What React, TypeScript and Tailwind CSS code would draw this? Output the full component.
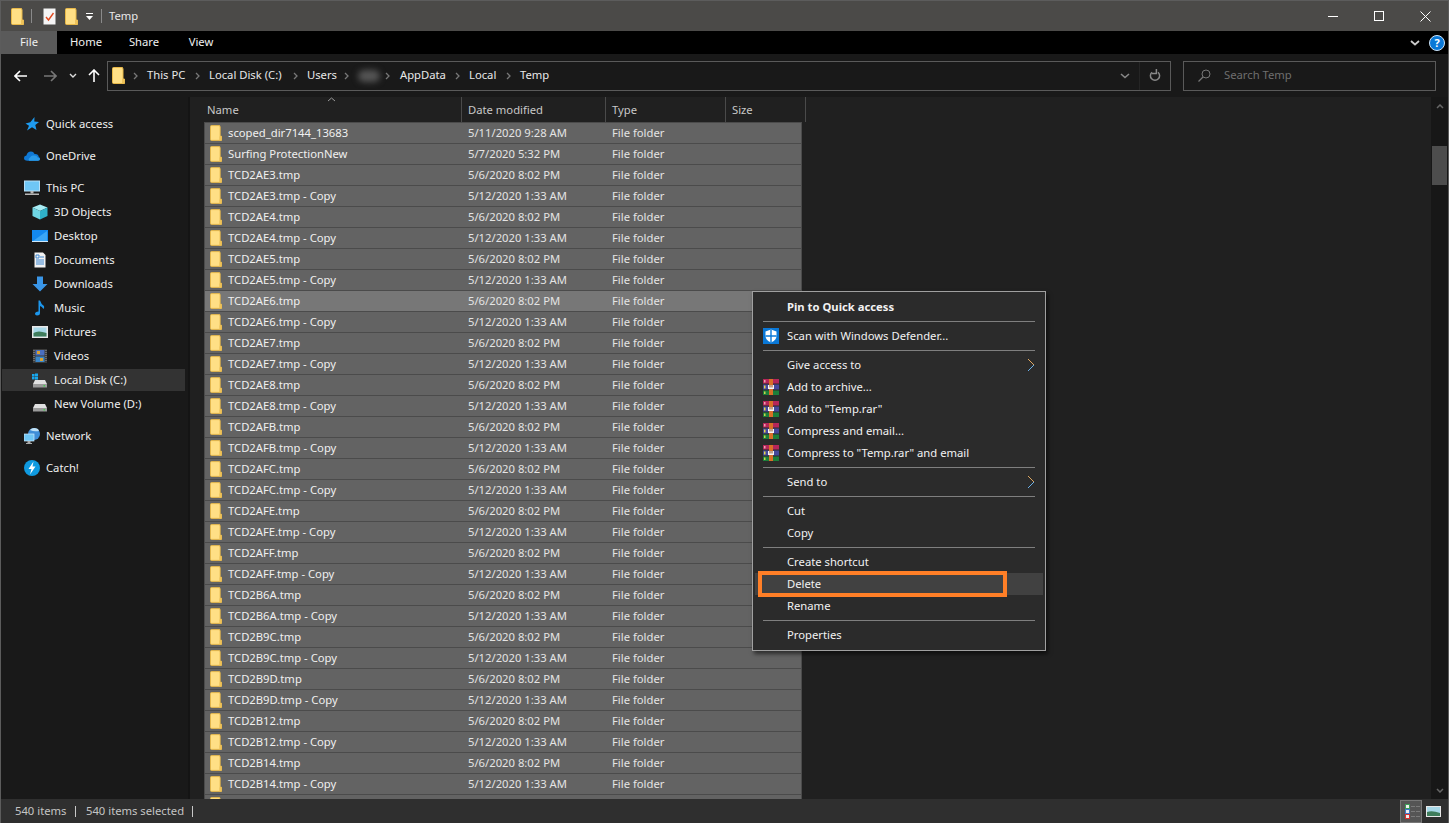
import { ReactNode } from 'react';

const font = { fontFamily: '"Noto Sans", sans-serif' };

function Folder({ className = 'w-[13px] h-[17px]' }: { className?: string }) {
  return (
    <svg viewBox="0 0 13 17" className={className}>
      <path d="M0.5 1.5 Q0.5 0.5 1.5 0.5 H10.5 L11 2 V12 L12.5 12 V16.5 H1.5 Q0.5 16.5 0.5 15.5 Z" fill="#ffdf85" stroke="#e8b848" />
      <rect x="10" y="12" width="2.5" height="4.5" fill="#eec25a" />
    </svg>
  );
}

function Rar() {
  return (
    <svg viewBox="0 0 16 16" className="w-4 h-4 shrink-0">
      <rect x="0" y="0" width="16" height="4.5" fill="#b5265a" />
      <rect x="0" y="5.5" width="16" height="5" fill="#45489c" />
      <rect x="0" y="11.5" width="16" height="4.5" fill="#1c7f3a" />
      <rect x="6" y="0" width="4" height="16" fill="#d96f28" />
      <rect x="5" y="6" width="6" height="4" fill="#f4f4f4" />
      <rect x="6.5" y="6" width="1" height="2.5" fill="#8a4a20" />
      <rect x="8.5" y="6" width="1" height="2.5" fill="#8a4a20" />
      <rect x="1" y="6.5" width="1.5" height="3" fill="#e8d84a" />
      <rect x="1" y="12.5" width="1.5" height="2.5" fill="#c8d84a" />
      <rect x="1" y="1" width="1.5" height="2.5" fill="#f0a0b0" />
    </svg>
  );
}

function Shield() {
  return (
    <svg viewBox="0 0 16 16" className="w-4 h-4 shrink-0">
      <rect width="16" height="16" fill="#0a78d7" />
      <path d="M8 1.5 L13.5 3.5 V8 Q13.5 12 8 14.5 Q2.5 12 2.5 8 V3.5 Z" fill="#fff" />
      <path d="M7.3 1.5 H8.7 V7.3 H13.5 V8.7 H8.7 V14.5 H7.3 V8.7 H2.5 V7.3 H7.3 Z" fill="#0a78d7" />
    </svg>
  );
}

function Chev({ className = '' }: { className?: string }) {
  return (
    <svg viewBox="0 0 5 8" className={`w-[5px] h-2 shrink-0 ${className}`}>
      <path d="M1 1 L4 4 L1 7" fill="none" stroke="#777" strokeWidth="1.3" />
    </svg>
  );
}

function Drive({ windows = false }: { windows?: boolean }) {
  return (
    <svg viewBox="0 0 16 16" className="w-4 h-4">
      <path d="M3 8 H13 L15 12 H1 Z" fill="#e0e0e0" />
      <rect x="1" y="12" width="14" height="3.5" fill="#9b9b9b" />
      <rect x="11.5" y="13" width="1.5" height="1.5" fill="#43d050" />
      {windows && (
        <g fill="#19a8ee">
          <rect x="0" y="2" width="2.6" height="2.6" />
          <rect x="3" y="1.5" width="3" height="3" />
          <rect x="0" y="5" width="2.6" height="2.4" />
          <rect x="3" y="5" width="3" height="2.6" />
        </g>
      )}
    </svg>
  );
}

const icons: Record<string, ReactNode> = {
  quick: (
    <svg viewBox="0 0 16 16" className="w-4 h-4">
      <path d="M10.5 1 L10.3 5.6 L15 6 L11.3 9 L12.5 14 L8 11.2 L3 14.5 L5 9.8 L1.5 7.5 L6.3 6.3 Z" fill="#1e9bf0" />
    </svg>
  ),
  onedrive: (
    <svg viewBox="0 0 16 16" className="w-4 h-4">
      <path d="M3.4 12.8 Q0 12.6 0 10 Q0 7.8 2.4 7.4 Q3.4 3.6 7 3.6 Q9.4 3.6 10.6 5.9 Q14.4 5.6 14.8 9 Q16 9.6 16 11 Q16 12.8 14 12.8 Z" fill="#0f78d4" />
      <path d="M5 12.8 Q3.8 10.6 6 9.4 Q7.4 6.8 10 7.6 Q12.6 7 13.6 9.4 Q16 9.6 16 11 Q16 12.8 14 12.8 Z" fill="#2a9ae8" />
    </svg>
  ),
  pc: (
    <svg viewBox="0 0 16 16" className="w-4 h-4">
      <rect x="0.5" y="1" width="15" height="10" fill="#6fc6f5" stroke="#b8e0f8" />
      <rect x="6.5" y="11" width="3" height="2.5" fill="#bbb" />
      <rect x="1" y="13.5" width="14" height="1.5" fill="#b8b8b8" />
    </svg>
  ),
  cube: (
    <svg viewBox="0 0 16 16" className="w-4 h-4">
      <path d="M8 0.5 L15.5 3.5 L8 7 L0.5 3.5 Z" fill="#a8ecf4" />
      <path d="M0.5 3.5 L8 7 V15.5 L0.5 12 Z" fill="#6fd6e4" />
      <path d="M15.5 3.5 L8 7 V15.5 L15.5 12 Z" fill="#2fb0c8" />
    </svg>
  ),
  desktop: (
    <svg viewBox="0 0 16 16" className="w-4 h-4">
      <rect x="0" y="2" width="16" height="12" fill="#1388ee" />
      <path d="M1 13 L15 3 V13 Z" fill="#3ba6f5" />
      <rect x="0" y="13" width="16" height="1" fill="#cfe8fb" />
    </svg>
  ),
  docs: (
    <svg viewBox="0 0 16 16" className="w-4 h-4">
      <path d="M2.5 0.5 H11 L13.5 3 V15.5 H2.5 Z" fill="#f2f2f2" />
      <path d="M4 3 H7 V6 H4 Z M8 5 H12 M4 8 H12 M4 10 H12 M4 12 H12" stroke="#3c86d0" fill="none" />
    </svg>
  ),
  downloads: (
    <svg viewBox="0 0 16 16" className="w-4 h-4">
      <path d="M5 0.5 H11 V8 H15.5 L8 15.5 L0.5 8 H5 Z" fill="#3a96e8" />
    </svg>
  ),
  music: (
    <svg viewBox="0 0 16 16" className="w-4 h-4">
      <path d="M6.5 0.5 H8 Q9 4 12 6 Q12.5 8 11.5 9 Q10 6.5 8 6 V13 Q8 15.5 5 15.5 Q3 15.5 3 13.8 Q3 12 6.5 11.5 Z" fill="#1c96ec" />
    </svg>
  ),
  pictures: (
    <svg viewBox="0 0 16 16" className="w-4 h-4">
      <rect x="0" y="2" width="16" height="12" fill="#e8e8e8" />
      <rect x="1.5" y="3.5" width="13" height="9" fill="#a8d8e8" />
      <path d="M1.5 9 Q6 6 14.5 9 V12.5 H1.5 Z" fill="#3f7d5c" />
    </svg>
  ),
  videos: (
    <svg viewBox="0 0 16 16" className="w-4 h-4">
      <rect x="1" y="1" width="14" height="14" fill="#3a3a3a" />
      <path d="M2 2 V14 M14 2 V14" stroke="#9a9a9a" strokeDasharray="1 1" />
      <rect x="3.5" y="2" width="9" height="5.5" fill="#4a6fc0" />
      <rect x="3.5" y="8.5" width="9" height="5.5" fill="#3a86c8" />
      <rect x="5" y="3" width="3" height="3" fill="#d8a030" />
      <rect x="8" y="10" width="3" height="3" fill="#d8a030" />
    </svg>
  ),
  local: <Drive windows />,
  volume: <Drive />,
  network: (
    <svg viewBox="0 0 16 16" className="w-4 h-4">
      <circle cx="10" cy="6" r="6" fill="#3f8ed8" />
      <path d="M6 2 Q10 4 15 3 L14 1 Q10 -1 7 1 Z" fill="#bfe0f5" />
      <rect x="0" y="6" width="10" height="7" fill="#6fc6f5" stroke="#cfe8fb" strokeWidth="0.7" />
      <rect x="3.5" y="13" width="3" height="2" fill="#aaa" />
      <rect x="2" y="15" width="6" height="1" fill="#aaa" />
    </svg>
  ),
  catch: (
    <svg viewBox="0 0 16 16" className="w-4 h-4">
      <circle cx="8" cy="8" r="8" fill="#0f9ae0" />
      <path d="M9.5 1.5 L4.5 9 H7.5 L6 14.5 L11.5 6.5 H8.5 Z" fill="#fff" />
    </svg>
  ),
};

type NavItem = { label: string; icon: string; nested?: boolean; selected?: boolean };

const navGroups: NavItem[][] = [
  [{ label: 'Quick access', icon: 'quick' }],
  [{ label: 'OneDrive', icon: 'onedrive' }],
  [
    { label: 'This PC', icon: 'pc' },
    { label: '3D Objects', icon: 'cube', nested: true },
    { label: 'Desktop', icon: 'desktop', nested: true },
    { label: 'Documents', icon: 'docs', nested: true },
    { label: 'Downloads', icon: 'downloads', nested: true },
    { label: 'Music', icon: 'music', nested: true },
    { label: 'Pictures', icon: 'pictures', nested: true },
    { label: 'Videos', icon: 'videos', nested: true },
    { label: 'Local Disk (C:)', icon: 'local', nested: true, selected: true },
    { label: 'New Volume (D:)', icon: 'volume', nested: true },
  ],
  [{ label: 'Network', icon: 'network' }],
  [{ label: 'Catch!', icon: 'catch' }],
];

const baseNames = ['TCD2AE3', 'TCD2AE4', 'TCD2AE5', 'TCD2AE6', 'TCD2AE7', 'TCD2AE8', 'TCD2AFB', 'TCD2AFC', 'TCD2AFE', 'TCD2AFF', 'TCD2B6A', 'TCD2B9C', 'TCD2B9D', 'TCD2B12', 'TCD2B14'];

// the last row is only peeking out above the status bar, its text is not visible
const files = [
  { name: 'scoped_dir7144_13683', date: '5/11/2020 9:28 AM', type: 'File folder' },
  { name: 'Surfing ProtectionNew', date: '5/7/2020 5:32 PM', type: 'File folder' },
  ...baseNames.flatMap((n) => [
    { name: `${n}.tmp`, date: '5/6/2020 8:02 PM', type: 'File folder' },
    { name: `${n}.tmp - Copy`, date: '5/12/2020 1:33 AM', type: 'File folder' },
  ]),
  { name: '', date: '', type: '' },
];

type MenuEntry = { label?: string; icon?: ReactNode; bold?: boolean; arrow?: boolean; hover?: boolean; sep?: boolean };

const menu: MenuEntry[] = [
  { label: 'Pin to Quick access', bold: true },
  { sep: true },
  { label: 'Scan with Windows Defender...', icon: <Shield /> },
  { sep: true },
  { label: 'Give access to', arrow: true },
  { label: 'Add to archive...', icon: <Rar /> },
  { label: 'Add to "Temp.rar"', icon: <Rar /> },
  { label: 'Compress and email...', icon: <Rar /> },
  { label: 'Compress to "Temp.rar" and email', icon: <Rar /> },
  { sep: true },
  { label: 'Send to', arrow: true },
  { sep: true },
  { label: 'Cut' },
  { label: 'Copy' },
  { sep: true },
  { label: 'Create shortcut' },
  { label: 'Delete', hover: true },
  { label: 'Rename' },
  { sep: true },
  { label: 'Properties' },
];

function TitleBar() {
  return (
    <div className="h-[30px] bg-[#4b4a48] flex items-center shrink-0 text-white">
      <div className="ml-[10px] flex items-center">
        <Folder />
        <div className="w-px h-[14px] bg-[#8a8a8a] ml-[7px]" />
        <svg viewBox="0 0 13 17" className="w-[13px] h-[17px] ml-[11px]">
          <path d="M0.5 0.5 H12.5 V16.5 H0.5 Z" fill="#f5f5f5" />
          <path d="M3 9 L5.5 12 L10.5 5" fill="none" stroke="#e04a20" strokeWidth="1.4" />
        </svg>
        <div className="ml-[9px]">
          <Folder />
        </div>
        <svg viewBox="0 0 9 9" className="w-[9px] h-[9px] ml-[7px]">
          <path d="M1 1.5 H8" stroke="#fff" />
          <path d="M1 4 H8 L4.5 8 Z" fill="#fff" />
        </svg>
        <div className="w-px h-[14px] bg-[#8a8a8a] ml-[7px]" />
        <span className="ml-[7px] text-[11.25px] text-[#e8e8e8]">Temp</span>
      </div>
      <div className="ml-auto flex items-center">
        <div className="w-[46px] flex justify-center">
          <div className="w-[10px] h-px bg-white" />
        </div>
        <div className="w-[46px] flex justify-center">
          <div className="w-[10px] h-[10px] border border-white" />
        </div>
        <div className="w-[46px] flex justify-center">
          <svg viewBox="0 0 11 11" className="w-[11px] h-[11px]">
            <path d="M0.5 0.5 L10.5 10.5 M10.5 0.5 L0.5 10.5" stroke="#fff" />
          </svg>
        </div>
      </div>
    </div>
  );
}

function Ribbon() {
  return (
    <div className="h-[23px] bg-black flex items-center shrink-0 text-[11.25px] text-[#f0f0f0]">
      <div className="w-[56px] h-full bg-[#5a5a5a] flex items-center justify-center">File</div>
      <div className="w-[58px] text-center">Home</div>
      <div className="w-[58px] text-center">Share</div>
      <div className="w-[56px] text-center">View</div>
      <div className="ml-auto flex items-center">
        <svg viewBox="0 0 10 6" className="w-[10px] h-[6px] mr-[9px]">
          <path d="M1 1 L5 4.5 L9 1" fill="none" stroke="#ccc" strokeWidth="1.8" />
        </svg>
        <div className="w-4 h-4 rounded-full bg-[#0a78d7] border border-[#cfe4f7] mr-[3px] flex items-center justify-center text-[11px] font-bold text-white leading-none">?</div>
      </div>
    </div>
  );
}

function Crumb({ children, width }: { children: ReactNode; width: string }) {
  return <span className={`${width} shrink-0 whitespace-nowrap`}>{children}</span>;
}

function AddressRow() {
  return (
    <div className="h-[43px] bg-[#191919] flex items-center shrink-0">
      <div className="w-[106px] flex items-center shrink-0">
        <svg viewBox="0 0 13 12" className="w-[13px] h-3 ml-[13px]">
          <path d="M6 1 L1 6 L6 11 M1 6 H13" fill="none" stroke="#fff" strokeWidth="1.6" />
        </svg>
        <svg viewBox="0 0 13 12" className="w-[13px] h-3 ml-[17px]">
          <path d="M7 1 L12 6 L7 11 M12 6 H0" fill="none" stroke="#777" strokeWidth="1.6" />
        </svg>
        <svg viewBox="0 0 8 5" className="w-2 h-[5px] ml-[12px]">
          <path d="M1 1 L4 4 L7 1" fill="none" stroke="#ddd" strokeWidth="1.4" />
        </svg>
        <svg viewBox="0 0 12 13" className="w-3 h-[13px] ml-[11px]">
          <path d="M1 6 L6 1 L11 6 M6 1 V13" fill="none" stroke="#fff" strokeWidth="1.6" />
        </svg>
      </div>
      <div className="w-[1064px] h-[30px] border border-[#5a5a5a] flex items-center text-[11.25px] text-[#e8e8e8] shrink-0">
        <div className="ml-[4px]">
          <Folder className="w-[13px] h-[17px]" />
        </div>
        <Chev className="ml-[8px] mr-[9px]" />
        <Crumb width="w-[48px]">This PC</Crumb>
        <Chev className="mr-[9px]" />
        <Crumb width="w-[84px]">Local Disk (C:)</Crumb>
        <Chev className="mr-[9px]" />
        <Crumb width="w-[37px]">Users</Crumb>
        <Chev className="mr-[9px]" />
        <div className="w-[22px] h-[12px] rounded-full bg-[#555] blur-[3px] shrink-0" />
        <Chev className="ml-[5px] mr-[10px]" />
        <Crumb width="w-[55px]">AppData</Crumb>
        <Chev className="mr-[9px]" />
        <Crumb width="w-[37px]">Local</Crumb>
        <Chev className="mr-[9px]" />
        <Crumb width="w-[30px]">Temp</Crumb>
        <div className="ml-auto flex items-center h-full">
          <svg viewBox="0 0 10 6" className="w-[10px] h-[6px] mr-[9px]">
            <path d="M1 1 L5 4.5 L9 1" fill="none" stroke="#888" strokeWidth="1.6" />
          </svg>
          <div className="w-px h-full bg-[#252525]" />
          <svg viewBox="0 0 12 13" className="w-3 h-[13px] mx-[9px]">
            <path d="M3 3.2 A4.6 4.6 0 1 0 9 3.2" fill="none" stroke="#888" strokeWidth="1.5" />
            <path d="M7.4 0 V4.6 H2.8" fill="none" stroke="#888" strokeWidth="1.5" />
          </svg>
        </div>
      </div>
      <div className="ml-[12px] w-[253px] h-[30px] border border-[#5a5a5a] flex items-center text-[11.25px] text-[#6e6e6e] shrink-0">
        <svg viewBox="0 0 13 13" className="w-[13px] h-[13px] ml-[14px]">
          <circle cx="8" cy="5" r="4" fill="none" stroke="#777" />
          <path d="M5 8 L0.5 12.5" stroke="#777" strokeWidth="1.2" />
        </svg>
        <span className="ml-[13px]">Search Temp</span>
      </div>
    </div>
  );
}

function Sidebar() {
  return (
    <div className="w-[187px] shrink-0 bg-[#191919] pt-[15px] flex flex-col gap-2 text-[11.25px] text-[#efefef]">
      {navGroups.map((group) => (
        <div key={group[0].label} className="flex flex-col">
          {group.map((item) => (
            <div key={item.label} className="h-6 flex items-center">
              <div className={`ml-px w-[183px] h-[22px] flex items-center ${item.nested ? 'pl-[30px]' : 'pl-[22px]'} ${item.selected ? 'bg-[#333333]' : ''}`}>
                <span className="w-4 h-4 flex">{icons[item.icon]}</span>
                <span className="ml-[6px]">{item.label}</span>
              </div>
            </div>
          ))}
        </div>
      ))}
    </div>
  );
}

function FileList() {
  return (
    <div className="flex-1 bg-[#202020] min-w-0 overflow-hidden border-l-2 border-[#141414] relative">
      <svg viewBox="0 0 9 5" className="absolute left-[137px] top-0 w-[9px] h-[5px]">
        <path d="M1 4 L4.5 1 L8 4" fill="none" stroke="#999" />
      </svg>
      <div className="h-[25px] flex text-[11.25px] text-[#c8c8c8] ml-[11px]">
        <div className="w-[261px] pl-[6px] pt-[5px] border-r border-[#4a4a4a]">Name</div>
        <div className="w-[144px] pl-[6px] pt-[5px] border-r border-[#4a4a4a]">Date modified</div>
        <div className="w-[120px] pl-[6px] pt-[5px] border-r border-[#4a4a4a]">Type</div>
        <div className="w-[80px] pl-[6px] pt-[5px] border-r border-[#4a4a4a]">Size</div>
      </div>
      <div className="ml-[14px] w-[598px] flex flex-col text-[11.25px] text-[#f0f0f0]">
        {files.map((f, i) => (
          <div key={i} className={`h-[22px] shrink-0 flex items-center border border-[#4b4b4b] -mb-px ${i === 8 ? 'bg-[#777777]' : 'bg-[#636363]'}`}>
            <div className="ml-[5px] flex">
              <Folder className="w-[12px] h-[16px]" />
            </div>
            <span className="ml-[6px] w-[240px] whitespace-nowrap">{f.name}</span>
            <span className="w-[144px] text-[#e4e4e4]">{f.date}</span>
            <span className="text-[#e4e4e4]">{f.type}</span>
          </div>
        ))}
      </div>
    </div>
  );
}

function Scrollbar() {
  return (
    <div className="w-[17px] shrink-0 bg-[#171717] flex flex-col items-center">
      <svg viewBox="0 0 8 5" className="w-2 h-[5px] mt-[7px]">
        <path d="M1 4 L4 1 L7 4" fill="none" stroke="#666" strokeWidth="1.5" />
      </svg>
      <div className="w-[15px] h-[39px] bg-[#4d4d4d] mt-[37px]" />
      <svg viewBox="0 0 8 5" className="w-2 h-[5px] mt-auto mb-[6px]">
        <path d="M1 1 L4 4 L7 1" fill="none" stroke="#666" strokeWidth="1.5" />
      </svg>
    </div>
  );
}

function DetailLine({ color }: { color: string }) {
  return (
    <div className="flex items-center gap-[1px]">
      <div className={`w-[5px] h-[5px] bg-[#eee] border ${color}`} />
      <div className="w-[4px] h-px bg-[#7a7a7a]" />
      <div className="w-[4px] h-px bg-[#7a7a7a]" />
    </div>
  );
}

function StatusBar() {
  return (
    <div className="h-[24px] bg-[#2f2f2f] flex items-center shrink-0 text-[11.25px] text-[#c4c4c4] relative z-10">
      <span className="ml-[14px] w-[60px]">540 items</span>
      <div className="w-px h-[11px] bg-[#c8c8c8]" />
      <span className="ml-[10px] w-[106px] whitespace-nowrap">540 items selected</span>
      <div className="w-px h-[11px] bg-[#c8c8c8]" />
      <div className="ml-auto flex items-center mr-[7px]">
        <div className="w-[22px] h-[23px] bg-[#555555] border border-[#777] flex flex-col justify-center pl-1">
          <DetailLine color="border-[#3c9a58]" />
          <DetailLine color="border-[#3c78c8]" />
          <DetailLine color="border-[#d83030]" />
        </div>
        <svg viewBox="0 0 15 11" className="w-[15px] h-[11px] ml-[4px]">
          <rect width="15" height="11" fill="#e8e8e8" />
          <rect x="1" y="1" width="13" height="9" fill="#a8d8e8" />
          <path d="M1 6 Q6 4 14 7 V10 H1 Z" fill="#3f7d5c" />
        </svg>
      </div>
    </div>
  );
}

function ContextMenu() {
  return (
    <div className="absolute left-[751px] top-[290px] w-[294px] h-[360px] bg-[#2b2b2b] border border-[#a0a0a0] pt-[4px] shadow-[2px_3px_4px_rgba(0,0,0,0.55)] z-20 text-[11.25px] text-[#f2f2f2]">
      {menu.map((m, i) =>
        m.sep ? (
          <div key={i} className="h-[7px] flex items-start">
            <div className="mt-[3px] ml-[10px] w-[272px] h-px bg-[#7f7f7f]" />
          </div>
        ) : (
          <div key={i} className={`h-[22px] mx-[2px] flex items-center ${m.hover ? 'bg-[#414141]' : ''}`}>
            <span className="w-[8px]" />
            <span className="w-4 h-4 flex shrink-0">{m.icon}</span>
            <span className={`ml-2 whitespace-nowrap ${m.bold ? 'font-bold' : ''}`}>{m.label}</span>
            {m.arrow && (
              <svg viewBox="0 0 8 14" className="w-2 h-[14px] ml-auto mr-[8px]">
                <path d="M1 1 L7 7" fill="none" stroke="#e0a860" strokeWidth="1" />
                <path d="M7 7 L1 13" fill="none" stroke="#6ab0e8" strokeWidth="1" />
              </svg>
            )}
          </div>
        ),
      )}
    </div>
  );
}

export default function App() {
  return (
    <div className="relative w-[1449px] h-screen flex flex-col overflow-hidden border border-[#5c5c5c] border-b-0" style={font}>
      <TitleBar />
      <Ribbon />
      <AddressRow />
      <div className="flex-1 flex min-h-0">
        <Sidebar />
        <FileList />
        <Scrollbar />
      </div>
      <StatusBar />
      <ContextMenu />
      <div className="absolute left-[757px] top-[570px] w-[249px] h-[26px] border-4 border-[#ff7f27] z-30" />
    </div>
  );
}
